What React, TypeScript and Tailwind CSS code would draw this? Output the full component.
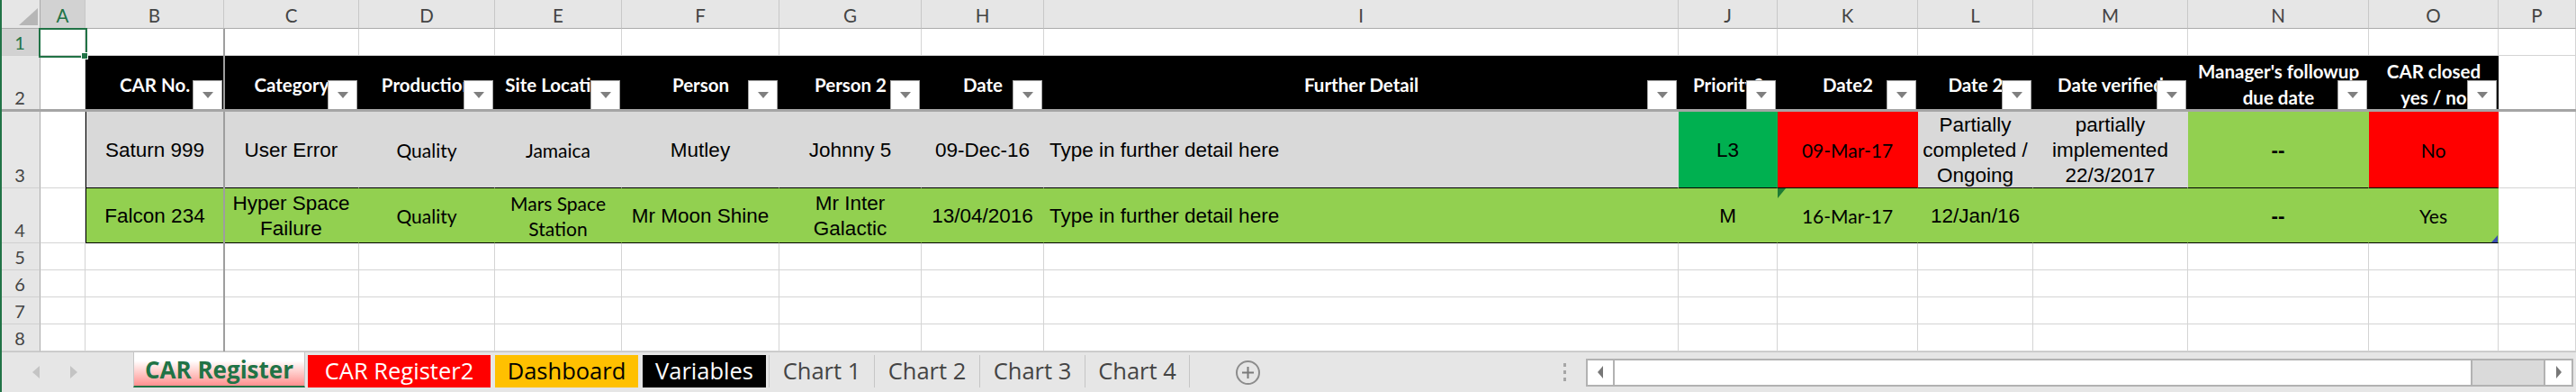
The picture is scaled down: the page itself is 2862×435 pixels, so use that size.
import type { ReactNode } from "react";

const ARIAL = "font-['Liberation_Sans',Arial,sans-serif]";
const CALIBRI = "font-['Lato',sans-serif]";

const COLS = ["A", "B", "C", "D", "E", "F", "G", "H", "I", "J", "K", "L", "M", "N", "O", "P"];

// row 2 table headers, B..O
const HEADERS: ReactNode[] = [
  "CAR No.",
  "Category",
  "Production",
  "Site Location",
  "Person",
  "Person 2",
  "Date",
  "Further Detail",
  "Priority?",
  "Date2",
  "Date 2",
  "Date verified",
  <>Manager's followup<br />due date</>,
  <>CAR closed<br />yes / no</>,
];

type Cell = { t?: ReactNode; cal?: boolean; bg: string; bold?: boolean; left?: boolean };

const GRAY = "bg-[#d9d9d9]";
const LIME = "bg-[#92d050]";
const RED = "bg-[#ff0000]";

const ROW3: Cell[] = [
  { t: "Saturn 999", bg: GRAY },
  { t: "User Error", bg: GRAY },
  { t: "Quality", cal: true, bg: GRAY },
  { t: "Jamaica", cal: true, bg: GRAY },
  { t: "Mutley", bg: GRAY },
  { t: "Johnny 5", bg: GRAY },
  { t: "09-Dec-16", bg: GRAY },
  { t: "Type in further detail here", bg: GRAY, left: true },
  { t: "L3", bg: "bg-[#00b050]" },
  { t: "09-Mar-17", cal: true, bg: RED },
  { t: <>Partially<br />completed /<br />Ongoing</>, bg: GRAY },
  { t: <>partially<br />implemented<br />22/3/2017</>, bg: GRAY },
  { t: "--", bold: true, bg: LIME },
  { t: "No", cal: true, bg: RED },
];

const ROW4: Cell[] = [
  { t: "Falcon 234", bg: LIME },
  { t: <>Hyper Space<br />Failure</>, bg: LIME },
  { t: "Quality", cal: true, bg: LIME },
  { t: <>Mars Space<br />Station</>, cal: true, bg: LIME },
  { t: "Mr Moon Shine", bg: LIME },
  { t: <>Mr Inter<br />Galactic</>, bg: LIME },
  { t: "13/04/2016", bg: LIME },
  { t: "Type in further detail here", bg: LIME, left: true },
  { t: "M", bg: LIME },
  { t: "16-Mar-17", cal: true, bg: LIME },
  { t: "12/Jan/16", bg: LIME },
  { bg: LIME },
  { t: "--", bold: true, bg: LIME },
  { t: "Yes", cal: true, bg: LIME },
];

function RowHead({ n, selected }: { n: number; selected?: boolean }) {
  return (
    <div
      className={`flex items-end justify-center pb-[2px] border-r border-r-[#ababab] border-b border-b-[#d0d0d0] text-[20px] leading-[24px] ${CALIBRI} ${
        selected ? "bg-[#d2d2d2] text-[#217346]" : "bg-[#e6e6e6] text-[#444]"
      }`}
    >
      {n}
    </div>
  );
}

function Blank() {
  return <div className="border-r border-b border-[#d4d4d4] bg-white" />;
}

function FilterButton() {
  return (
    <div className="absolute right-[2px] bottom-[1px] flex h-[33px] w-[33px] items-center justify-center border border-[#a6a6a6] bg-white">
      <svg width="12" height="7" viewBox="0 0 12 7">
        <polygon points="0,0 12,0 6,7" fill="#7f7f7f" />
      </svg>
    </div>
  );
}

function HeaderCell({ label }: { label: ReactNode }) {
  return (
    <div
      className={`relative flex items-center justify-center overflow-hidden whitespace-nowrap bg-black pt-[3px] text-center text-[20.5px] leading-[29px] font-bold text-white ${CALIBRI}`}
    >
      <span>{label}</span>
      <FilterButton />
    </div>
  );
}

function DataCell({ c, first }: { c: Cell; first?: boolean }) {
  return (
    <div
      className={`flex items-center overflow-hidden whitespace-nowrap border-r border-r-transparent border-b border-b-black pt-[2px] text-black leading-[28px] ${
        c.bg
      } ${c.left ? "justify-start pl-[6px] text-left" : "justify-center text-center"} ${
        c.cal ? `${CALIBRI} text-[21px]` : `${ARIAL} text-[22.5px]`
      } ${c.bold ? "font-bold" : ""} ${first ? "border-l border-l-black" : ""}`}
    >
      <span>{c.t}</span>
    </div>
  );
}

function DataRow({ n, cells }: { n: number; cells: Cell[] }) {
  return (
    <>
      <RowHead n={n} />
      <Blank />
      {cells.map((c, i) => (
        <DataCell key={i} c={c} first={i === 0} />
      ))}
      <Blank />
    </>
  );
}

function EmptyRow({ n, selected }: { n: number; selected?: boolean }) {
  return (
    <>
      <RowHead n={n} selected={selected} />
      {COLS.map((c) => (
        <Blank key={c} />
      ))}
    </>
  );
}

function SheetTab({ children, className }: { children: ReactNode; className: string }) {
  return (
    <div className={`mt-[3px] flex h-[36px] shrink-0 items-center justify-center whitespace-nowrap ${className}`}>
      {children}
    </div>
  );
}

function TabBar() {
  return (
    <div className="flex h-[45px] items-start border-t border-[#c6c6c6] bg-[#e6e6e6] font-['Open_Sans',sans-serif] text-[25.5px] leading-none">
      <div className="flex h-[44px] w-[148px] shrink-0 items-center gap-[34px] pl-[36px]">
        <svg width="8" height="14" viewBox="0 0 8 14">
          <polygon points="8,0 8,14 0,7" fill="#c4c4c4" />
        </svg>
        <svg width="8" height="14" viewBox="0 0 8 14">
          <polygon points="0,0 0,14 8,7" fill="#c4c4c4" />
        </svg>
      </div>
      <div className="flex h-[39px] w-[191px] shrink-0 items-center justify-center border-x border-[#c6c6c6] border-b-2 border-b-[#217346] bg-linear-to-b from-white from-25% to-[#ff8f8f] text-[26px] font-bold text-[#217346]">
        CAR Register
      </div>
      <SheetTab className="ml-[3px] w-[203px] bg-[#ff0000] text-white">CAR Register2</SheetTab>
      <SheetTab className="ml-[5px] w-[159px] bg-[#ffc000] text-black">Dashboard</SheetTab>
      <SheetTab className="ml-[5px] w-[137px] bg-black text-white">Variables</SheetTab>
      <SheetTab className="ml-[3px] w-[117px] border-l border-[#c6c6c6] text-[#444]">Chart 1</SheetTab>
      <SheetTab className="w-[117px] border-l border-[#c6c6c6] text-[#444]">Chart 2</SheetTab>
      <SheetTab className="w-[117px] border-l border-[#c6c6c6] text-[#444]">Chart 3</SheetTab>
      <SheetTab className="w-[117px] border-x border-[#c6c6c6] text-[#444]">Chart 4</SheetTab>
      <div className="ml-[51px] flex h-[27px] w-[27px] shrink-0 items-center justify-center self-center rounded-full border-2 border-[#8c8c8c]">
        <svg width="13" height="13" viewBox="0 0 13 13">
          <rect x="5.5" y="0" width="2" height="13" fill="#7a7a7a" />
          <rect x="0" y="5.5" width="13" height="2" fill="#7a7a7a" />
        </svg>
      </div>
      <div className="ml-[337px] flex shrink-0 flex-col gap-[4px] self-center">
        <div className="h-[4px] w-[3px] bg-[#a6a6a6]" />
        <div className="h-[4px] w-[3px] bg-[#a6a6a6]" />
        <div className="h-[4px] w-[3px] bg-[#a6a6a6]" />
      </div>
      <div className="ml-[22px] flex h-[31px] w-[1097px] shrink-0 self-center border-y-2 border-[#b2b2b2]">
        <div className="flex w-[32px] items-center justify-center border-x-2 border-[#b2b2b2] bg-white">
          <svg width="6" height="14" viewBox="0 0 6 14">
            <polygon points="6,0 6,14 0,7" fill="#777" />
          </svg>
        </div>
        <div className="w-[953px] border-r-2 border-[#b2b2b2] bg-white" />
        <div className="w-[79px] bg-[#dadada]" />
        <div className="flex w-[33px] items-center justify-center border-x-2 border-[#b2b2b2] bg-white">
          <svg width="6" height="14" viewBox="0 0 6 14">
            <polygon points="0,0 0,14 6,7" fill="#777" />
          </svg>
        </div>
      </div>
    </div>
  );
}

export default function App() {
  return (
    <div className="relative h-[435px] w-[2862px] overflow-hidden bg-white">
      <div className="grid grid-cols-[45px_50px_154px_150px_151px_141px_175px_158px_136px_705px_110px_156px_128px_172px_201px_144px_86px] grid-rows-[32px_30px_61px_86px_61px_30px_30px_30px_30px]">
        {/* column letters */}
        <div className="relative border-r border-b border-[#ababab] bg-[#e6e6e6]">
          <svg className="absolute left-[21px] top-[9px]" width="21" height="19" viewBox="0 0 21 19">
            <polygon points="21,0 21,19 0,19" fill="#b6b6b6" />
          </svg>
        </div>
        {COLS.map((c) => (
          <div
            key={c}
            className={`flex items-center justify-center border-r border-r-[#c8c8c8] border-b border-b-[#ababab] pt-[3px] text-[20.5px] leading-none ${CALIBRI} ${
              c === "A" ? "bg-[#d2d2d2] text-[#217346]" : "bg-[#e6e6e6] text-[#444]"
            }`}
          >
            {c}
          </div>
        ))}

        <EmptyRow n={1} selected />

        {/* row 2: table header */}
        <RowHead n={2} />
        <Blank />
        {HEADERS.map((h, i) => (
          <HeaderCell key={i} label={h} />
        ))}
        <Blank />

        <DataRow n={3} cells={ROW3} />
        <DataRow n={4} cells={ROW4} />

        <EmptyRow n={5} />
        <EmptyRow n={6} />
        <EmptyRow n={7} />
        <EmptyRow n={8} />
      </div>

      <TabBar />

      {/* freeze panes */}
      <div className="absolute left-[248px] top-[32px] h-[358px] w-[2px] bg-[#9e9e9e]" />
      <div className="absolute left-0 top-[121px] h-[3px] w-[2862px] bg-[#a5a5a5]" />

      {/* active cell A1 */}
      <div className="absolute left-[43px] top-[31px] h-[33px] w-[54px] border-2 border-[#217346]" />
      <div className="absolute left-[90px] top-[58px] h-[8px] w-[8px] border border-white bg-[#217346]" />

      {/* error indicator on K4, resize handle on O4 */}
      <svg className="absolute left-[1975px] top-[209px]" width="9" height="11" viewBox="0 0 9 11">
        <polygon points="0,0 9,0 0,11" fill="#1e7b34" />
      </svg>
      <svg className="absolute left-[2768px] top-[261px]" width="7" height="8" viewBox="0 0 7 8">
        <polygon points="7,0 7,8 0,8" fill="#3d4fb5" />
      </svg>

      {/* window frame */}
      <div className="absolute left-0 top-0 h-[435px] w-[2px] bg-[#217346]" />
    </div>
  );
}
